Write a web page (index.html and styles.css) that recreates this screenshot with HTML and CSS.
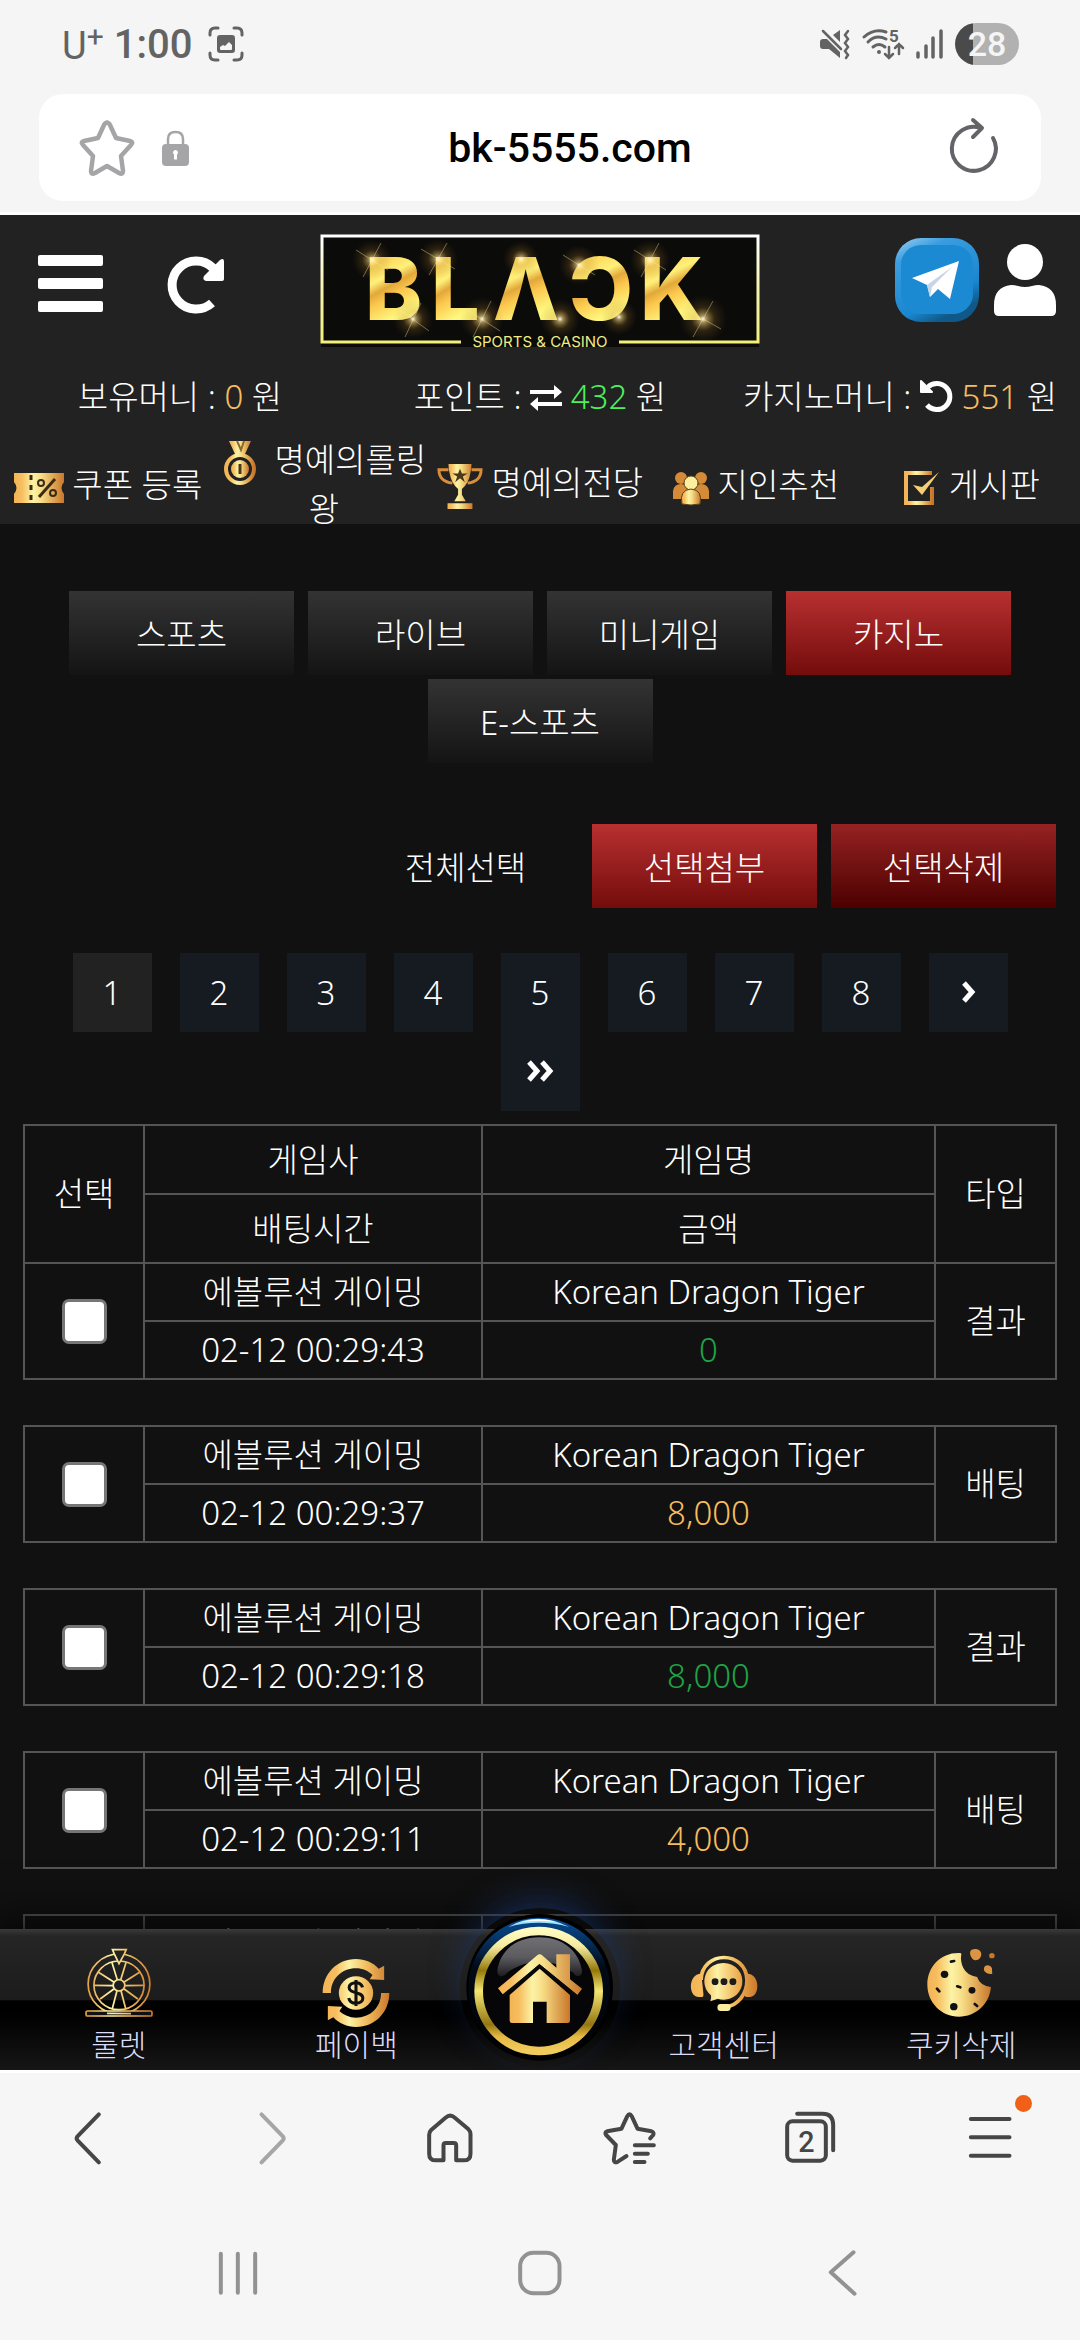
FILE: index.html
```html
<!DOCTYPE html>
<html lang="ko">
<head>
  <meta charset="UTF-8" />
  <meta name="viewport" content="width=device-width, initial-scale=1.0"/>
  <title>BLACK - 배팅내역</title>
  <link rel="stylesheet" href="styles.css">
</head>
<body>

  <!-- shared gradients -->
  <svg class="defs" aria-hidden="true">
    <defs>
      <linearGradient id="gold" x1="0" x2="1" y1="0" y2="0">
        <stop offset="0" stop-color="#f3b455"/>
        <stop offset=".15" stop-color="#f6bd5e"/>
        <stop offset=".38" stop-color="#fcf3a6"/>
        <stop offset=".55" stop-color="#f7dd85"/>
        <stop offset="1" stop-color="#c9762a"/>
      </linearGradient>
      <linearGradient id="wheelGold" gradientUnits="userSpaceOnUse" x1="246" x2="444" y1="0" y2="0">
        <stop offset="0" stop-color="#e0963c"/>
        <stop offset=".4" stop-color="#fcf3a6"/>
        <stop offset=".6" stop-color="#f3c469"/>
        <stop offset="1" stop-color="#c9762a"/>
      </linearGradient>
      <linearGradient id="payGold" gradientUnits="userSpaceOnUse" x1="939" x2="1137" y1="0" y2="0">
        <stop offset="0" stop-color="#f3b455"/>
        <stop offset=".2" stop-color="#f6bd5e"/>
        <stop offset=".4" stop-color="#fcf3a6"/>
        <stop offset=".65" stop-color="#f3bd60"/>
        <stop offset="1" stop-color="#c9762a"/>
      </linearGradient>
      <linearGradient id="headGold" gradientUnits="userSpaceOnUse" x1="431" x2="629" y1="0" y2="0">
        <stop offset="0" stop-color="#f3b455"/>
        <stop offset=".2" stop-color="#f6bd5e"/>
        <stop offset=".4" stop-color="#fcf3a6"/>
        <stop offset=".7" stop-color="#efb054"/>
        <stop offset="1" stop-color="#c9762a"/>
      </linearGradient>
      <linearGradient id="letter" x1="0" x2=".3" y1="0" y2="1">
        <stop offset="0" stop-color="#fffbd0"/>
        <stop offset=".3" stop-color="#fdd95c"/>
        <stop offset=".45" stop-color="#fff07a"/>
        <stop offset=".55" stop-color="#e2a83a"/>
        <stop offset=".65" stop-color="#fcc84e"/>
        <stop offset=".85" stop-color="#fff77e"/>
      </linearGradient>
      <linearGradient id="frame" x1="0" x2="0" y1="0" y2="1">
        <stop offset="0" stop-color="#fff"/>
        <stop offset=".5" stop-color="#f5f2b0"/>
        <stop offset="1" stop-color="#f3f07a"/>
      </linearGradient>
      <radialGradient id="spark">
        <stop offset="0" stop-color="#fff"/>
        <stop offset=".15" stop-color="#ffe28a" stop-opacity=".6"/>
        <stop offset=".5" stop-color="#b8862c" stop-opacity=".2"/>
        <stop offset="1" stop-color="#8a6420" stop-opacity="0"/>
      </radialGradient>
      <linearGradient id="ring" x1="0" x2="0" y1="0" y2="1">
        <stop offset="0" stop-color="#fffbc0"/>
        <stop offset=".13" stop-color="#f3ea9c"/>
        <stop offset=".33" stop-color="#94790a"/>
        <stop offset=".5" stop-color="#f4e672"/>
        <stop offset=".78" stop-color="#937612"/>
        <stop offset=".88" stop-color="#e5b945"/>
        <stop offset="1" stop-color="#f1cc5c"/>
      </linearGradient>
      <linearGradient id="gloss" x1="0" x2="0" y1="0" y2="1">
        <stop offset="0" stop-color="#706f74"/>
        <stop offset=".5" stop-color="#5c5b60"/>
        <stop offset="1" stop-color="#1c1c1e"/>
      </linearGradient>
      <linearGradient id="blueRim" x1="0" x2="0" y1="0" y2="1">
        <stop offset="0" stop-color="#0a4a92"/>
        <stop offset=".12" stop-color="#063a70"/>
        <stop offset=".35" stop-color="#020a18"/>
        <stop offset="1" stop-color="#000"/>
      </linearGradient>
      <linearGradient id="tele" x1="0" x2=".5" y1="0" y2="1">
        <stop offset="0" stop-color="#9fd2f3"/>
        <stop offset=".25" stop-color="#3a9de0"/>
        <stop offset=".8" stop-color="#1a86cf"/>
        <stop offset="1" stop-color="#0f5888"/>
      </linearGradient>
    </defs>
  </svg>

  <div class="browser-top">
    <div class="statusbar">
      <span class="carrier">U<sup>+</sup></span>
      <span class="clock">1:00</span>
      <svg class="shot" width="36" height="36" viewBox="0 0 36 36" fill="none" stroke="#636363" stroke-width="3" stroke-linecap="round">
        <path d="M2 9V7q0-5 5-5h3M26 2h3q5 0 5 5v2M34 27v2q0 5-5 5h-3M10 34H7q-5 0-5-5v-2"/>
        <path fill="#636363" stroke="none" fill-rule="evenodd" d="M12 9h12q3 0 3 3v12q0 3-3 3H12q-3 0-3-3V12q0-3 3-3zM12 21v2q0 1 1 1h10q1 0 1-1v-4l-3-3-4 4-2-1z"/>
      </svg>
      <div class="status-right">
        <svg width="30" height="30" viewBox="0 0 30 30" fill="#636363">
          <path d="M0 13q0-3 3-3h4l13 13v6L9 20H3q-3 0-3-3zM20 1v12l-7-7z"/>
          <path d="M3 2l18 18M28 2l-3 4 3 4-3 4 3 4-3 4 3 4-2 3" fill="none" stroke="#636363" stroke-width="2.5" stroke-linecap="round"/>
        </svg>
        <svg class="wifi" width="42" height="32" viewBox="0 0 42 32" fill="none" stroke="#636363" stroke-width="3" stroke-linecap="round">
          <path d="M2 9Q12 0 24 4M6 14q8-8 18-3M11 19q6-5 12 0"/>
          <path d="M27 19v10M23 26l4 4 4-4M37 26V16M33 20l4-4 4 4" stroke-width="2.5"/>
          <circle cx="17" cy="24" r="2" fill="#636363" stroke="none"/>
          <text x="27" y="14">5</text>
        </svg>
        <svg width="27" height="30" viewBox="0 0 27 30" stroke="#636363" stroke-width="3.5" stroke-linecap="round">
          <path d="M2 24v4M10 17v11M17 9v19M25 2v26"/>
        </svg>
        <span class="battery">28</span>
      </div>
    </div>

    <div class="urlbar">
      <button class="icon-btn" aria-label="북마크">
        <svg width="54" height="56" viewBox="0 0 54 56" fill="none" stroke="#a5a5a8" stroke-width="4.5" stroke-linejoin="round">
          <path d="M24 5q3-5 6 0l6 13 14 3q4 1 1 4L41 36l2 15q0 4-4 2L27 46 15 53q-4 2-4-2l2-15L3 25q-3-3 1-4l14-3z"/>
        </svg>
      </button>
      <svg class="lock" width="27" height="36" viewBox="0 0 27 36">
        <path d="M6 16V9q0-7 7.500-7T21 9v7" fill="none" stroke="#a5a5a8" stroke-width="2.500"/>
        <rect y="14" width="27" height="22" rx="4" fill="#a5a5a8"/>
        <path d="M13.500 20a2.500 2.500 0 0 1 1.500 4.500v5h-3v-5a2.500 2.500 0 0 1 1.500-4.500z" fill="#fff"/>
      </svg>
      <input class="address" type="text" aria-label="주소" value="bk-5555.com">
      <button class="icon-btn" aria-label="새로고침">
        <svg width="48" height="58" viewBox="0 0 48 58" fill="none" stroke="#646468" stroke-width="4" stroke-linecap="round" stroke-linejoin="round">
          <path d="M42 19a22 22 0 1 1-12-10M22 1l9 8-9 9"/>
        </svg>
      </button>
    </div>
  </div>

  <header class="header">
    <div class="header-top">
      <div class="side side-left">
        <button class="icon-btn" aria-label="메뉴">
          <svg width="65" height="60" viewBox="0 0 65 60" fill="#fff">
            <rect width="65" height="11" rx="2" y="1"/><rect width="65" height="11" rx="2" y="24"/><rect width="65" height="11" rx="2" y="47"/>
          </svg>
        </button>
        <button class="icon-btn" aria-label="새로고침">
          <svg width="56" height="58" viewBox="0 0 56 58">
            <path d="M43 48A24 24 0 1 1 44 13" fill="none" stroke="#fff" stroke-width="9"/>
            <path d="M35 21L51 5q4-3 4 2v17q0 2-2 2H37q-4-1-2-5z" fill="#fff"/>
          </svg>
        </button>
      </div>
      <a href="#" aria-label="BLACK SPORTS &amp; CASINO">
        <svg class="logo" width="438" height="112" viewBox="0 0 438 112">
          <rect width="438" height="112" fill="#0b0b0a"/>
          <path d="M140 107H1V1h436v106H298" fill="none" stroke="url(#frame)" stroke-width="3"/>
          <g class="logo-name" fill="url(#letter)">
            <text x="44" y="85">B</text>
            <text x="110" y="85">L</text>
            <text x="172" y="85">Λ</text>
            <text x="248" y="85">Ɔ</text>
            <text x="319" y="85">K</text>
          </g>
          <g fill="url(#spark)">
            <circle cx="51" cy="25" r="20"/><circle cx="117" cy="24" r="20"/><circle cx="92" cy="84" r="20"/><circle cx="161" cy="84" r="22"/><circle cx="200" cy="24" r="18"/>
            <circle cx="239" cy="84" r="20"/><circle cx="258" cy="30" r="20"/><circle cx="329" cy="25" r="20"/><circle cx="298" cy="82" r="18"/><circle cx="382" cy="84" r="24"/>
          </g>
          <g stroke="#ffe9a0" stroke-opacity=".4">
            <path d="M35 15l32 20M60 8L42 42M100 14l34 20M126 8l-18 32M78 74l30 22M100 68L84 102M145 74l34 22M170 66l-18 36M242 20l32 20M313 15l32 20M338 8l-18 34M364 74l36 20M392 66l-20 36"/>
          </g>
          <text class="logo-sub" x="219" y="112" text-anchor="middle" fill="#f0ec86">SPORTS &amp; CASINO</text>
        </svg>
      </a>
      <div class="side side-right">
        <a href="#" aria-label="텔레그램">
          <svg width="86" height="86" viewBox="0 0 86 86">
            <rect x="1" y="1" width="84" height="84" rx="26" fill="url(#tele)"/>
            <rect x="7" y="8" width="72" height="69" rx="20" fill="#1c8ad3"/>
            <path d="M18 41L65 24 56 62 44 52 36 60 33 48z" fill="#fff"/>
            <path d="M33 48L58 30 38 50 36 60z" fill="#c3d5e6"/>
          </svg>
        </a>
        <a href="#" aria-label="내 정보">
          <svg width="62" height="72" viewBox="0 0 62 72" fill="#fff">
            <circle cx="31" cy="18" r="18"/>
            <path d="M17 41q4 0 7 1 7 2 14 0 3-1 7-1 17 2 17 20v6q0 5-5 5H5q-5 0-5-5v-6q0-18 17-20z"/>
          </svg>
        </a>
      </div>
    </div>

    <div class="money">
      <div>보유머니 : <span class="gold">0</span> 원</div>
      <div>포인트 :
        <svg width="32" height="28" viewBox="0 0 32 28" fill="#fff"><path d="M0 6h24V1l8 7-8 7v-5H0zM32 22H8v5l-8-7 8-7v5h24z"/></svg>
        <span class="green">432</span> 원</div>
      <div>카지노머니 :
        <svg width="33" height="33" viewBox="0 0 33 33"><path d="M8 8a13 13 0 1 1-1 18" fill="none" stroke="#fff" stroke-width="5"/><path d="M1 2v11h11z" fill="#fff" stroke="#fff" stroke-width="2" stroke-linejoin="round"/></svg>
        <span class="gold">551</span> 원</div>
    </div>

    <nav class="quick">
      <a href="#">
        <svg width="50" height="30" viewBox="0 0 50 30">
          <path d="M0 0h50v9q-5 6 0 12v9H0v-9q5-6 0-12z" fill="url(#gold)"/>
          <path d="M17 2v5M17 12v5M17 22v5" stroke="#3a2c12" stroke-width="3"/>
          <path d="M25 24L41 6" stroke="#3a2c12" stroke-width="3"/>
          <g fill="none" stroke="#3a2c12" stroke-width="2"><circle cx="27" cy="10" r="3"/><circle cx="39" cy="20" r="3"/></g>
        </svg>
        쿠폰 등록</a>
      <a href="#">
        <svg width="44" height="44" viewBox="0 0 44 44">
          <path d="M7 0h22l-6 13H13z" fill="url(#gold)"/>
          <path d="M15 0l4 9 3-9" fill="none" stroke="#8a6a2c" stroke-width="2"/>
          <circle cx="18" cy="28" r="14" fill="none" stroke="url(#gold)" stroke-width="4"/>
          <circle cx="18" cy="28" r="9" fill="url(#gold)"/>
          <path d="M18 23v10" stroke="#4a3816" stroke-width="3"/>
        </svg>
        명예의롤링왕</a>
      <a href="#">
        <svg width="46" height="46" viewBox="0 0 48 48">
          <path d="M12 1h24q0 4-1 9-2 12-9 17v6l4 7H18l4-7v-6q-7-5-9-17-1-5-1-9zM11 42h26v6H11z" fill="url(#gold)"/>
          <path d="M12 7H2q0 12 14 14M36 7h10q0 12-14 14" fill="none" stroke="#d98d3a" stroke-width="3"/>
          <path d="M24 6l2 5h6l-5 3 2 6-5-4-5 4 2-6-5-3h6z" fill="#4a3816"/>
        </svg>
        명예의전당</a>
      <a href="#">
        <svg width="36" height="34" viewBox="0 0 36 34">
          <g fill="#d48a36"><circle cx="8" cy="7" r="6"/><circle cx="28" cy="7" r="6"/><path d="M0 28V20q1-7 8-7t8 7v8zM20 28v-8q1-7 8-7t8 7v8z"/></g>
          <circle cx="18" cy="12" r="7" fill="#fcef9f" stroke="#5a4218"/>
          <path d="M9 33q-3-14 9-15 12 1 9 15-9 2-18 0z" fill="url(#gold)" stroke="#5a4218"/>
        </svg>
        지인추천</a>
      <a href="#">
        <svg width="36" height="34" viewBox="0 0 36 34" fill="none" stroke="url(#gold)" stroke-width="4">
          <path d="M28 2H2v30h26V16"/><path d="M9 14l9 10L35 1l-17 15z" fill="#f6cf74" stroke="none"/>
        </svg>
        게시판</a>
    </nav>
  </header>

  <main class="content">
    <div class="tabs">
      <button class="btn">스포츠</button>
      <button class="btn">라이브</button>
      <button class="btn">미니게임</button>
      <button class="btn btn-red">카지노</button>
      <button class="btn">E-스포츠</button>
    </div>

    <div class="actions">
      <button class="btn btn-plain">전체선택</button>
      <button class="btn btn-red">선택첨부</button>
      <button class="btn btn-dark">선택삭제</button>
    </div>

    <nav class="pages" aria-label="페이지">
      <a href="#" class="on">1</a>
      <a href="#">2</a>
      <a href="#">3</a>
      <a href="#">4</a>
      <a href="#">5</a>
      <a href="#">6</a>
      <a href="#">7</a>
      <a href="#">8</a>
      <a href="#" aria-label="다음"><svg width="28" height="24" viewBox="0 0 28 24"><path d="M10 2l8 9-8 9"/></svg></a>
      <a href="#" aria-label="마지막"><svg width="28" height="24" viewBox="0 0 28 24"><path d="M3 2l8 9-8 9M16 2l8 9-8 9"/></svg></a>
    </nav>

    <table class="bets">
      <colgroup><col class="c-check"><col class="c-time"><col><col class="c-type"></colgroup>
      <thead>
        <tr><th rowspan="2">선택</th><th>게임사</th><th>게임명</th><th rowspan="2">타입</th></tr>
        <tr><th>배팅시간</th><th>금액</th></tr>
      </thead>
      <tbody>
        <tr><td rowspan="2"><input type="checkbox" aria-label="선택 00:29:43"></td><td>에볼루션 게이밍</td><td>Korean Dragon Tiger</td><td rowspan="2">결과</td></tr>
        <tr><td>02-12 00:29:43</td><td class="win">0</td></tr>
        <tr class="space"><td colspan="4"></td></tr>
        <tr><td rowspan="2"><input type="checkbox" aria-label="선택 00:29:37"></td><td>에볼루션 게이밍</td><td>Korean Dragon Tiger</td><td rowspan="2">배팅</td></tr>
        <tr><td>02-12 00:29:37</td><td class="gold">8,000</td></tr>
        <tr class="space"><td colspan="4"></td></tr>
        <tr><td rowspan="2"><input type="checkbox" aria-label="선택 00:29:18"></td><td>에볼루션 게이밍</td><td>Korean Dragon Tiger</td><td rowspan="2">결과</td></tr>
        <tr><td>02-12 00:29:18</td><td class="win">8,000</td></tr>
        <tr class="space"><td colspan="4"></td></tr>
        <tr><td rowspan="2"><input type="checkbox" aria-label="선택 00:29:11"></td><td>에볼루션 게이밍</td><td>Korean Dragon Tiger</td><td rowspan="2">배팅</td></tr>
        <tr><td>02-12 00:29:11</td><td class="gold">4,000</td></tr>
        <tr class="space"><td colspan="4"></td></tr>
        <tr><td></td><td>에볼루션 게이밍</td><td>Korean Dragon Tiger</td><td></td></tr>
      </tbody>
    </table>
  </main>

  <nav class="dock">
    <a href="#" class="dock-item">
      <svg width="68" height="78" viewBox="246 207 198 234" preserveAspectRatio="none" fill="none" stroke="url(#wheelGold)" stroke-width="5">
        <circle cx="345" cy="312" r="90"/><circle cx="345" cy="316" r="73"/><circle cx="345" cy="316" r="17"/>
        <path d="M363 317L418 316M328 317L272 316M360 306L406 276M330 306L284 276M360 327L400 357M330 327L290 357M351 333L364 384M339 333L326 384M350 299L366 246M340 299L324 246"/>
        <path d="M326 209h40l-5 12-16 30-14-30z" fill="#222"/>
        <rect x="249" y="393" width="192" height="15" rx="4" fill="#111"/>
        <path d="M310 400L380 401"/>
      </svg>
      룰렛</a>
    <a href="#" class="dock-item">
      <svg width="68" height="78" viewBox="939 207 198 234" preserveAspectRatio="none">
        <path d="M941 339c0-58 42-102 97-102 26 0 50 11 66 29l16-9v43l-42-2 8-13c-12-12-29-20-48-20-41 0-73 31-73 74zM1135 339c0 58-42 102-97 102-26 0-50-11-66-29l-16 9v-43l42 2-8 13c12 12 29 20 48 20 41 0 73-31 73-74z" fill="url(#payGold)"/>
        <circle cx="1038" cy="339" r="50" fill="url(#payGold)"/>
        <path d="M1057 322c-3-11-10-14-19-14-12 0-20 6-20 15 0 20 40 10 40 31 0 10-8 16-20 16-11 0-19-4-21-16M1038 300v78" fill="none" stroke="#111" stroke-width="9"/>
      </svg>
      페이백</a>
    <a href="#" class="dock-home" aria-label="홈">
      <svg width="160" height="160" viewBox="60 84 480 480">
        <circle cx="299" cy="322" r="220" fill="#000"/>
        <circle cx="297" cy="325" r="212" fill="url(#blueRim)"/>
        <path d="M205 141Q290 92 388 141 296 116 205 141z" fill="#9be4ff"/>
        <path d="M245 126q50-16 105 0-55-6-105 0z" fill="#fff"/>
        <circle cx="296" cy="333" r="180" fill="#060609" stroke="url(#ring)" stroke-width="26"/>
        <path d="M172 272C180 210 230 172 298 172s118 38 128 100c2 22-20 20-26 6-60-40-130-46-196-2-16 20-32 16-32-4z" fill="url(#gloss)"/>
        <path d="M174 325L290 227q9-8 18 0l41 36v-40h41v75l36 28-14 19-114-93-108 93z" fill="url(#gold)"/>
        <path d="M209 345l90-79 91 79v77q0 7-7 7h-63v-64h-41v64h-63q-7 0-7-7z" fill="url(#gold)"/>
        <path d="M188 348L299 258 410 348" fill="none" stroke="#0a0a0a" stroke-width="8"/>
      </svg>
    </a>
    <a href="#" class="dock-item">
      <svg width="68" height="78" viewBox="431 207 198 234" preserveAspectRatio="none">
        <path d="M463 300c2-90 132-90 134 0 0 44-28 76-60 80" fill="none" stroke="url(#headGold)" stroke-width="11"/>
        <path d="M463 281c-38 0-38 70-6 70h8q6 0 5-10l-5-50q0-10-2-10zM598 281c38 0 38 70 6 70h-8q-6 0-5-10l5-50q0-10 2-10z" fill="url(#headGold)"/>
        <circle cx="530" cy="305" r="58" fill="#1f1f1f"/>
        <path d="M530 249a54 55 0 1 1-18 107l-22 8q4-8 2-18a54 55 0 0 1 38-97z" fill="url(#headGold)"/>
        <g fill="#1b1b1b"><circle cx="504" cy="305" r="10"/><circle cx="530" cy="305" r="10"/><circle cx="556" cy="305" r="10"/></g>
        <rect x="511" y="372" width="38" height="21" rx="9" fill="#fcefa0"/>
      </svg>
      고객센터</a>
    <a href="#" class="dock-item">
      <svg width="68" height="78" viewBox="1124 207 198 234" preserveAspectRatio="none">
        <path d="M1224 222q-4 22 6 42 10 22 40 27 8 26 40 30c-4 52-44 89-93 89-51 0-92-43-92-96 0-56 42-98 95-95q4 0 4 3z" fill="url(#gold)"/>
        <path d="M1254 209c16-5 28 2 28 14s-10 20-20 17-18-26-8-31zM1293 258q14-6 20 6l1 17c-14 4-32-8-21-23z" fill="#dc9442"/>
        <circle cx="1313" cy="227" r="8" fill="#c9762a"/>
        <g fill="#111"><circle cx="1175" cy="283" r="11"/><circle cx="1255" cy="331" r="10"/><circle cx="1202" cy="380" r="11"/></g>
        <path d="M1194 245l9-2M1153 326l7 8M1212 319l9 3M1263 372l7 6" stroke="#111" stroke-width="8" stroke-linecap="round"/>
      </svg>
      쿠키삭제</a>
  </nav>

  <div class="toolbar">
    <button aria-label="뒤로"><svg viewBox="183 122 157 162"><path d="M288 132L224 198q-5 6 0 12l64 66"/></svg></button>
    <button class="off" aria-label="앞으로"><svg viewBox="706 122 157 162"><path d="M759 132l64 66q5 6 0 12l-64 66"/></svg></button>
    <button aria-label="홈"><svg viewBox="1228 122 157 162"><path d="M1287 270h-23q-20 0-20-20v-57q0-8 6-14l43-37q14-12 28 0l41 35q6 6 6 14v59q0 20-20 20h-23v-45q0-7-7-7h-24q-7 0-7 7z"/></svg></button>
    <button aria-label="북마크 목록"><svg viewBox="183 122 157 162"><path d="M251 257l-26 17q-12 6-12-6l6-44-29-30q-6-8 3-11l43-8 17-37q7-13 14 0l17 37 42 8q9 3 5 11l-9 10M276 225h57M276 250h39M276 275h29"/></svg></button>
    <button aria-label="탭"><svg viewBox="706 122 157 162"><rect x="716" y="153" width="116" height="118" rx="16"/><path d="M746 130h76q32 0 32 34v76"/><text x="774" y="245" text-anchor="middle">2</text></svg></button>
    <button class="more" aria-label="더보기"><svg viewBox="1228 122 157 162"><path d="M1249 146h116M1249 201h116M1249 256h116"/></svg><span class="badge"></span></button>
  </div>

  <div class="sysnav">
    <button aria-label="최근 앱"><svg viewBox="613 531 157 162"><path d="M640 554v117M691 554v117M743 554v117"/></svg></button>
    <button aria-label="홈 화면"><svg viewBox="1490 531 157 162"><rect x="1509" y="551" width="118" height="122" rx="40"/></svg></button>
    <button aria-label="뒤로"><svg viewBox="799 531 157 162"><path d="M912 550L844 610 915 674"/></svg></button>
  </div>

</body>
</html>
```
FILE: styles.css
```css
* { box-sizing: border-box; }
body { margin: 0; height: 100vh; display: flex; flex-direction: column; overflow: hidden; background: #111; color: #fff; font-family: "Noto Sans", "Noto Sans CJK KR", sans-serif; font-weight: 300; font-size: 33px; }
a { color: inherit; text-decoration: none; }
button { font: inherit; color: inherit; border: 0; padding: 0; background: none; cursor: pointer; }
svg { flex: none; overflow: visible; }
.defs { position: absolute; width: 0; height: 0; }
.gold { color: #f6bc5d; }
.green { color: #4cf05a; }
.win { color: #1fa345; }
.icon-btn { display: flex; }

/* phone status + address bar */
.browser-top { background: #f5f5f5; padding-bottom: 11px; }
.statusbar { display: flex; align-items: center; height: 94px; padding: 0 61px 6px 62px; color: #636363; font-family: Roboto, sans-serif; }
.carrier { font-size: 38px; font-weight: 400; line-height: 40px; padding-top: 4px; }
.carrier sup { font-size: 30px; line-height: 0; vertical-align: 12px; }
.clock { font-size: 40px; font-weight: 500; margin-left: 10px; }
.shot { margin-left: 16px; }
.status-right { display: flex; align-items: center; gap: 12px; margin-left: auto; }
.wifi text { font: 700 17px Roboto, sans-serif; fill: #636363; stroke: none; }
.battery { width: 64px; height: 42px; border-radius: 21px; background: linear-gradient(90deg, #4a4a4a 28%, #b1b1b1 28%); color: #f5f5f5; font-size: 34px; font-weight: 500; line-height: 42px; text-align: center; }
.urlbar { display: flex; align-items: center; height: 107px; margin: 0 39px; padding: 0 42px 0 41px; background: #fff; border-radius: 24px; }
.lock { margin-left: 28px; }
.address { flex: 1; min-width: 0; border: 0; background: none; outline: 0; color: #000; text-align: center; font: 500 41px Roboto, sans-serif; }

/* site header */
.header { background: #222; border-top: 3px solid #fff; padding-top: 20px; }
.header-top { display: grid; grid-template-columns: 1fr auto 1fr; }
.header-top > a { height: 112px; }
.side { display: flex; align-items: center; height: 98px; }
.side-left { gap: 66px; padding-left: 38px; }
.side-right { justify-content: flex-end; gap: 14px; height: 90px; padding-right: 24px; }
.side a { display: flex; }
.logo-name { font-family: Inter, sans-serif; font-weight: 800; font-size: 86px; }
.logo-sub { font-family: Inter, sans-serif; font-weight: 400; font-size: 15px; }
.money { display: grid; grid-template-columns: repeat(3, 1fr); margin-top: 26px; line-height: 48px; text-align: center; white-space: nowrap; }
.money svg { vertical-align: -3px; }
.quick { display: grid; grid-template-columns: repeat(5, 1fr); align-items: center; height: 88px; margin-top: 15px; line-height: 47px; text-align: center; }
.quick svg { vertical-align: middle; }

/* betting history */
.content { flex: 1; min-height: 0; overflow: hidden; background: #111; }
.tabs { display: flex; flex-wrap: wrap; justify-content: center; gap: 4px 14px; padding: 67px 60px 0; }
.btn { width: 225px; height: 84px; background: linear-gradient(#333, #141414); }
.btn-red { background: linear-gradient(#b83030, #740c0c); }
.btn-dark { background: linear-gradient(#962222, #4c0000); }
.btn-plain { background: none; }
.actions { display: flex; justify-content: flex-end; gap: 14px; padding: 61px 24px 0; }
.pages { display: flex; flex-wrap: wrap; justify-content: center; gap: 0 28px; padding: 45px 60px 0; }
.pages a { display: flex; align-items: center; justify-content: center; width: 79px; height: 79px; background: #161b22; }
.pages .on { background: #222; }
.pages svg { fill: none; stroke: #fff; stroke-width: 5; }
.bets { width: calc(100% - 46px); margin: 13px auto 0; border-collapse: collapse; table-layout: fixed; text-align: center; }
.bets .c-check { width: 120px; }
.bets .c-time { width: 338px; }
.bets .c-type { width: 121px; }
.bets th, .bets td { height: 58px; padding: 0; border: 2px solid #555; line-height: 40px; white-space: nowrap; }
.bets th { height: 69px; font-weight: 300; }
.bets .space td { height: 47px; border-width: 2px 0; }
.bets input { appearance: none; display: block; width: 45px; height: 45px; margin: 0 auto; background: #fff; border: 3px solid #767676; border-radius: 7px; }

/* bottom dock */
.dock { position: relative; z-index: 1; display: flex; justify-content: center; height: 141px; background: linear-gradient(#3a3a3a, #252525 5%, #1c1c1c 50%, #000 51%, #000 60%, #161616); box-shadow: 0 0 40px 10px rgba(0,0,0,.7); color: #dcdcf8; font-size: 30px; line-height: 36px; }
.dock-item { display: flex; flex-direction: column; align-items: center; width: 22%; padding-top: 20px; }
.dock-home { display: flex; justify-content: center; width: 12%; margin-top: -21px; height: 160px; }
.dock-home svg { border-radius: 50%; box-shadow: 0 -14px 34px -6px rgba(30,70,150,.5); }

/* browser toolbar + system nav */
.toolbar, .sysnav { position: relative; z-index: 2; display: grid; background: #f6f6f6; }
.toolbar { grid-template-columns: repeat(6, 1fr); height: 133px; border-top: 3px solid #fff; color: #464646; }
.sysnav { grid-template-columns: repeat(3, 1fr); height: 137px; padding: 2px 8% 0; color: #929292; }
.toolbar button, .sysnav button { display: flex; align-items: center; justify-content: center; }
.toolbar svg, .sysnav svg { width: 54px; height: 54px; fill: none; stroke: currentColor; stroke-width: 12; stroke-linecap: round; stroke-linejoin: round; }
.toolbar text { font: 500 86px Roboto, sans-serif; fill: currentColor; stroke: none; }
.toolbar .off { color: #a6a6a6; }
.more { position: relative; }
.badge { position: absolute; top: 22px; right: 48px; width: 17px; height: 17px; border-radius: 50%; background: #f06017; }
```
